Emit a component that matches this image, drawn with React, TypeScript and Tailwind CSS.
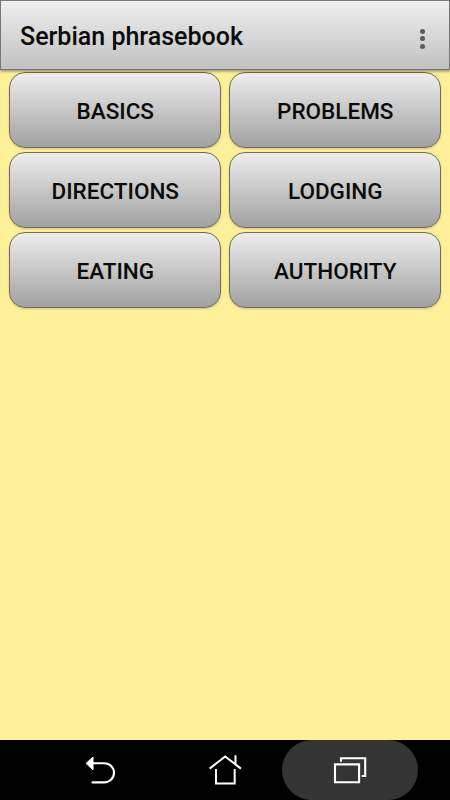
const rows = ["BASICS", "PROBLEMS", "DIRECTIONS", "LODGING", "EATING", "AUTHORITY"];

function BackIcon() {
  return (
    <svg width="32" height="32" viewBox="85 754 32 32" fill="none" stroke="#fff" strokeWidth="2.1" strokeLinecap="round">
      <path d="M92 763.2H104.4A9.6 9.6 0 0 1 104.4 782.4H92.5" />
      <path d="M86.3 763.2L93 757V769.4Z" fill="#fff" strokeWidth="1" strokeLinejoin="round" />
    </svg>
  );
}

function HomeIcon() {
  return (
    <svg width="34" height="32" viewBox="208 754 34 32" fill="none" stroke="#fff" strokeWidth="2">
      <path d="M209.6 768.6L225.2 756.4L240.9 768.6M235.5 755.2V764M216 769V783.4H234.7V769" />
    </svg>
  );
}

function RecentsIcon() {
  return (
    <svg width="36" height="32" viewBox="332 754 36 32" fill="none" stroke="#fff" strokeWidth="2.1">
      <path d="M341 761.8V758.2H365.2V776H361.7M335 764.4H359.1V782.3H335Z" />
    </svg>
  );
}

export default function App() {
  return (
    <div className="flex h-[800px] w-[450px] flex-col overflow-hidden bg-[#fef098] font-['Roboto',sans-serif] font-medium text-[#0b0b0b]">
      <header className="relative flex h-[70px] shrink-0 items-center justify-between border border-[#777] bg-linear-to-b from-[#efefef] to-[#c1c1c1] pl-[19px] pr-[24px] shadow-[0_1px_3px_rgba(0,0,0,0.5)]">
        <h1 className="pt-[4px] text-[25px] leading-[30px]">Serbian phrasebook</h1>
        <button aria-label="More options" className="flex flex-col gap-[2.5px] pt-[7px]">
          <span className="size-[5px] rounded-full bg-[#5b5b5b]" />
          <span className="size-[5px] rounded-full bg-[#5b5b5b]" />
          <span className="size-[5px] rounded-full bg-[#5b5b5b]" />
        </button>
      </header>
      <main className="grid flex-1 auto-rows-[76px] grid-cols-2 content-start gap-x-[7.5px] gap-y-1 pl-[8.5px] pr-[9px] pt-[2px]">
        {rows.map((label) => (
          <button
            key={label}
            className="rounded-[16px] border border-[#706d5b] bg-linear-to-b from-[#eeeeee] to-[#a2a1a1] pl-[1px] pt-[2px] text-[22.5px] leading-7 shadow-[0_1px_2px_rgba(100,90,30,0.3)]"
          >
            {label}
          </button>
        ))}
      </main>
      <nav className="flex h-[60px] shrink-0 items-center bg-black pl-[33px]">
        <button aria-label="Back" className="flex h-[60px] w-[135px] items-center justify-center">
          <BackIcon />
        </button>
        <button aria-label="Home" className="flex h-[60px] w-[114px] items-center justify-center">
          <HomeIcon />
        </button>
        <button aria-label="Recent apps" className="flex h-[60px] w-[136px] items-center justify-center rounded-full bg-[#343434]">
          <RecentsIcon />
        </button>
      </nav>
    </div>
  );
}
